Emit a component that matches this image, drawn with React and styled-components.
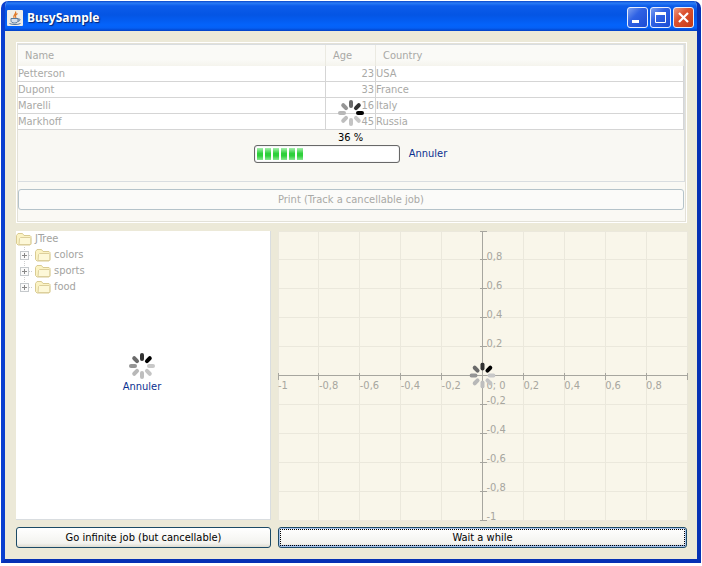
import React from "react";
import styled, { createGlobalStyle } from "styled-components";

const GlobalStyle = createGlobalStyle`
  * { box-sizing: border-box; }
  body {
    margin: 0;
    background: #fff;
    font: 11px/16px "DejaVu Sans Condensed", "DejaVu Sans", sans-serif;
    font-stretch: condensed;
    color: #000;
  }
  button { font: inherit; cursor: default; }
`;

const Desktop = styled.div`
  display: flex;
  min-height: 100vh;
  padding: 1px 1px 3px 1px;
`;

const Frame = styled.main`
  flex: 1;
  display: flex;
  flex-direction: column;
  min-width: 0;
  border: solid #0a3fd0;
  border-width: 0 4px 4px 4px;
  border-color: #0a3fd0 #0631b4 #0631b4 #0a3fd0;
  border-radius: 7px 7px 0 0;
  background: #ece9d8;
  overflow: hidden;
`;

const TitleBar = styled.header`
  display: flex;
  align-items: center;
  gap: 4px;
  height: 30px;
  padding: 4px 3px 1px 2px;
  background: linear-gradient(#0a46c8 0, #2a7cf6 2px, #0c5cea 5px, #0455e4 14px, #0463fb 24px, #0560f5 27px, #0340c4 30px);
`;

const Title = styled.h1`
  flex: 1;
  margin: 0;
  font: bold 12px/16px "Noto Sans", sans-serif;
  color: #fff;
  text-shadow: 1px 1px 1px #06226e;
`;

const Controls = styled.div`
  display: flex;
  gap: 2px;
`;

const ControlButton = styled.button`
  display: block;
  width: 21px;
  height: 21px;
  padding: 0;
  border: 1px solid #e8eefc;
  border-radius: 3px;
  background: ${(p) =>
    p.$close
      ? "linear-gradient(135deg, #eb9a80, #dc5230 40%, #c43a14)"
      : "linear-gradient(135deg, #7c9ff0, #2f62e4 40%, #1c4cd4)"};
  svg { display: block; }
`;

const Content = styled.div`
  flex: 1;
  display: flex;
  flex-direction: column;
  gap: 8px;
  padding: 11px 10px 11px 11px;
`;

const JobPanel = styled.section`
  position: relative;
  display: flex;
  flex-direction: column;
  gap: 7px;
  padding: 1px 1px 12px 0;
  border: 1px solid #fff;
  outline: 1px solid #e3e1d8;
  outline-offset: -2px;
  background: #faf9f4;
  color: #a9a9a6;
`;

const ScrollPane = styled.div`
  height: 138px;
  border: 1px solid #d9dde0;
  background: #f9f8f3;
`;

const Table = styled.table`
  width: 100%;
  table-layout: fixed;
  border-collapse: separate;
  border-spacing: 0;
`;

const Column = styled.col`
  width: ${(p) => p.$width};
`;

const HeadCell = styled.th`
  height: 21px;
  padding: 0 7px;
  border-right: 1px solid #ebeae2;
  background: linear-gradient(#fafaf7 70%, #f5f4ed);
  font-weight: normal;
  text-align: left;
`;

const Cell = styled.td`
  height: 16px;
  padding: 0 1px 0 0;
  border: solid #d5d5d5;
  border-width: 0 1px 1px 0;
  background: #fff;
  line-height: 15px;
  text-align: ${(p) => (p.$number ? "right" : "left")};
`;

const PushButton = styled.button`
  height: 21px;
  margin: ${(p) => (p.$muted ? "0 1px" : "0")};
  padding: 0 8px;
  border: 1px solid ${(p) => (p.$muted ? "#b5c3ca" : "#1c4a66")};
  border-radius: 3px;
  background: ${(p) =>
    p.$muted ? "#fbfbf9" : "linear-gradient(#fff, #f3f3ef 80%, #dedbd0)"};
  color: ${(p) => (p.$muted ? "#a9a9a6" : "#000")};
  line-height: 18px;
  ${(p) =>
    p.$focused &&
    `
    box-shadow: inset 0 0 0 1px #a9c4ec, inset 0 -2px 0 #86a6dc;
    outline: 1px dotted #000;
    outline-offset: -3px;
  `}
`;

const BusyOverlay = styled.div`
  position: absolute;
  inset: 0;
  display: flex;
  flex-direction: column;
  align-items: center;
  justify-content: center;
  padding: 0 2px 2px 0;
  color: #000;
`;

const Percent = styled.label`
  line-height: 15px;
  margin-top: 4px;
`;

const ProgressRow = styled.div`
  display: flex;
  align-items: center;
  gap: 9px;
`;

const Track = styled.div`
  display: flex;
  gap: 2px;
  width: 146px;
  height: 18px;
  padding: 2px;
  border: 1px solid #686868;
  border-radius: 3px;
  background: #fff;
  box-shadow: inset 0 0 1px #999;
`;

const Block = styled.span`
  width: 6px;
  background: linear-gradient(#a8efae, #2fd03b 45%, #2fd03b 65%, #8be892);
`;

const CancelLink = styled.a`
  color: #0a3090;
  text-decoration: none;
`;

const Lower = styled.div`
  flex: 1;
  display: grid;
  grid-template-columns: minmax(0, 255fr) minmax(0, 409fr);
  grid-template-rows: minmax(289px, 1fr) auto;
  gap: 7px;
`;

const TreePane = styled.section`
  position: relative;
  border: solid #d9dde0;
  border-width: 0 1px 1px 0;
  background: #fff;
  color: #a3a3a0;
`;

const TreeList = styled.ul`
  margin: 0;
  padding: 0;
  list-style: none;
`;

const TreeItem = styled.li`
  display: flex;
  align-items: center;
  height: 16px;
  padding-left: ${(p) => (p.$child ? "4px" : "0")};
  gap: 3px;
  svg { flex: none; }
`;

const ChartPane = styled.section`
  display: grid;
  background: #f9f6ea;
`;

const ChartSvg = styled.svg`
  display: block;
  width: 100%;
  height: 100%;
  overflow: visible;
  text {
    font: 11px "DejaVu Sans Condensed", "DejaVu Sans", sans-serif;
    font-stretch: condensed;
    fill: #a7a69f;
  }
`;

const people = [
  ["Petterson", 23, "USA"],
  ["Dupont", 33, "France"],
  ["Marelli", 16, "Italy"],
  ["Markhoff", 45, "Russia"],
];

/* Shades go clockwise from the darkest blade. */
const shades = ["#000", "#c8c8c8", "#c4c4c4", "#bebebe", "#b8b8b8", "#959595", "#6a6a6a", "#333"];

function Spinner({ head }) {
  return (
    <svg width="26" height="26" viewBox="-13 -13 26 26" role="img" aria-label="Busy">
      {shades.map((shade, i) => (
        <line
          key={i}
          x1="0"
          y1="-7"
          x2="0"
          y2="-11"
          stroke={shade}
          strokeWidth="4"
          strokeLinecap="round"
          transform={`rotate(${head + i * 45})`}
        />
      ))}
    </svg>
  );
}

function JavaIcon() {
  return (
    <svg width="16" height="16" viewBox="0 0 16 16" aria-hidden="true">
      <rect width="16" height="16" rx="1" fill="#f0eee8" />
      <path d="M8.5 1.5C10 4 5.5 5 7 8M10.5 3.5C8 5 8 6 9 8" fill="none" stroke="#e07b2c" strokeWidth="1.3" />
      <path d="M4 8.5h7v2c0 2-1.500 2.500-3.500 2.500S4 12.500 4 10.500zM11 9h1.500c1 0 .8 2.300-1.700 2.300" fill="#d4deea" stroke="#58799c" />
      <path d="M2.500 13.500c3 1.400 8 1.400 11 0" fill="none" stroke="#58799c" />
    </svg>
  );
}

function FolderIcon() {
  return (
    <svg width="16" height="14" viewBox="0 0 16 14" aria-hidden="true">
      <path d="M.5 11.500V3.500l1.500-2h4.500l1.500 2h6l1 1v7l-1 1.500h-12z" fill="#fbf3c4" stroke="#d9cb93" />
      <path d="M3 12.500l.5-6 1-1H14l.8 1v6z" fill="#fdf8d8" stroke="#dccf9c" />
    </svg>
  );
}

function Expander({ last }) {
  return (
    <svg width="12" height="16" viewBox="0 0 12 16" aria-hidden="true">
      <path d={last ? "M4.500 0v4" : "M4.500 0v16"} stroke="#cfcfcf" strokeDasharray="1 1" />
      <path d="M9 8.500h3" stroke="#cfcfcf" strokeDasharray="1 1" />
      <rect x=".5" y="4.500" width="8" height="8" fill="#fafafa" stroke="#c5c9cc" />
      <path d="M2 8.500h5M4.500 6v5" stroke="#888" />
    </svg>
  );
}

const ticks = [-1, -0.8, -0.6, -0.4, -0.2, 0.2, 0.4, 0.6, 0.8, 1];
const format = (v) => String(v).replace(".", ",");

function Chart() {
  return (
    <ChartSvg role="img" aria-label="Empty plot">
      {ticks.map((v) => {
        const x = `${50 + v * 50}%`;
        const y = `${50 - v * 50}%`;
        return (
          <g key={v} shapeRendering="crispEdges">
            <line x1={x} x2={x} y1="0" y2="100%" stroke="#ebe8dc" />
            <line x1="0" x2="100%" y1={y} y2={y} stroke="#ebe8dc" />
          </g>
        );
      })}
      <g stroke="#a7a69f" shapeRendering="crispEdges">
        <line x1="0" x2="100%" y1="50%" y2="50%" />
        <line x1="50%" x2="50%" y1="0" y2="100%" />
        {ticks.map((v) => (
          <React.Fragment key={v}>
            <svg x={`${50 + v * 50}%`} y="50%" overflow="visible">
              <line y1="-3" y2="4" />
            </svg>
            <svg x="50%" y={`${50 - v * 50}%`} overflow="visible">
              <line x1="-3" x2="4" />
            </svg>
          </React.Fragment>
        ))}
      </g>
      {ticks.filter((v) => v < 1).map((v) => (
        <React.Fragment key={v}>
          <text x={`${50 + v * 50}%`} y="50%" dy="13">{format(v)}</text>
          <text x="50%" y={`${50 - v * 50}%`} dx="4">{format(v)}</text>
        </React.Fragment>
      ))}
      <text x="50%" y="50%" dx="4" dy="13">0; 0</text>
      <svg x="50%" y="50%" overflow="visible">
        <g transform="translate(-13 -13)">
          <Spinner head={45} />
        </g>
      </svg>
    </ChartSvg>
  );
}

export default function App() {
  return (
    <Desktop>
      <GlobalStyle />
      <Frame>
        <TitleBar>
          <JavaIcon />
          <Title>BusySample</Title>
          <Controls>
            <ControlButton aria-label="Minimize">
              <svg width="19" height="19"><path d="M4 13.500h7" stroke="#fff" strokeWidth="3" /></svg>
            </ControlButton>
            <ControlButton aria-label="Maximize">
              <svg width="19" height="19">
                <path d="M4.500 5v9.500h10V5" fill="none" stroke="#fff" />
                <path d="M4 5.500h11" stroke="#fff" strokeWidth="3" />
              </svg>
            </ControlButton>
            <ControlButton $close aria-label="Close">
              <svg width="19" height="19"><path d="M5 5l9 9M14 5l-9 9" stroke="#fff" strokeWidth="2.200" /></svg>
            </ControlButton>
          </Controls>
        </TitleBar>
        <Content>
          <JobPanel>
            <ScrollPane>
              <Table>
                <colgroup>
                  <Column $width="308px" />
                  <Column $width="50px" />
                  <Column $width="auto" />
                </colgroup>
                <thead>
                  <tr>
                    <HeadCell scope="col">Name</HeadCell>
                    <HeadCell scope="col">Age</HeadCell>
                    <HeadCell scope="col">Country</HeadCell>
                  </tr>
                </thead>
                <tbody>
                  {people.map(([name, age, country]) => (
                    <tr key={name}>
                      <Cell>{name}</Cell>
                      <Cell $number>{age}</Cell>
                      <Cell>{country}</Cell>
                    </tr>
                  ))}
                </tbody>
              </Table>
            </ScrollPane>
            <PushButton $muted>Print (Track a cancellable job)</PushButton>
            <BusyOverlay>
              <Spinner head={90} />
              <Percent id="job-percent">36 %</Percent>
              <ProgressRow>
                <Track role="progressbar" aria-labelledby="job-percent" aria-valuenow={36}>
                  {[0, 1, 2, 3, 4, 5].map((i) => <Block key={i} />)}
                </Track>
                <CancelLink href="#cancel-print">Annuler</CancelLink>
              </ProgressRow>
            </BusyOverlay>
          </JobPanel>
          <Lower>
            <TreePane>
              <TreeList>
                <TreeItem><FolderIcon />JTree</TreeItem>
                {["colors", "sports", "food"].map((name) => (
                  <TreeItem key={name} $child>
                    <Expander last={name === "food"} />
                    <FolderIcon />
                    {name}
                  </TreeItem>
                ))}
              </TreeList>
              <BusyOverlay>
                <Spinner head={45} />
                <CancelLink href="#cancel-tree">Annuler</CancelLink>
              </BusyOverlay>
            </TreePane>
            <ChartPane>
              <Chart />
            </ChartPane>
            <PushButton>Go infinite job (but cancellable)</PushButton>
            <PushButton $focused>Wait a while</PushButton>
          </Lower>
        </Content>
      </Frame>
    </Desktop>
  );
}
